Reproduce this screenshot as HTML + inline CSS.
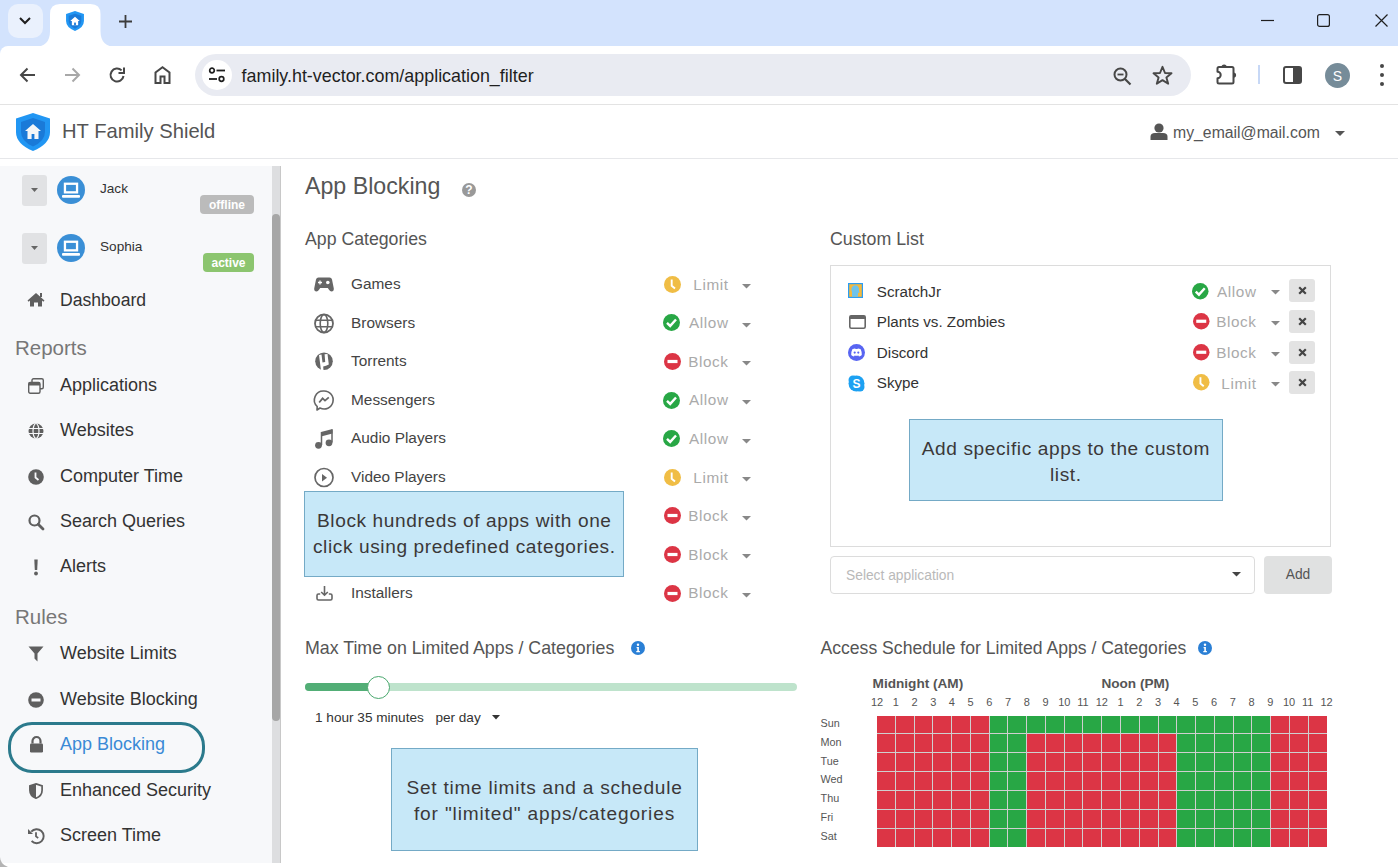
<!DOCTYPE html>
<html><head><meta charset="utf-8"><style>
html,body{margin:0;padding:0;width:1398px;height:867px;overflow:hidden;background:#fff;position:relative;font-family:"Liberation Sans",sans-serif}
.t{position:absolute;white-space:pre}
svg{overflow:visible}
.grid{position:absolute;display:grid;grid-template-columns:repeat(24,1fr);grid-template-rows:repeat(7,1fr);gap:1px;background:#cfcfcf}
.grid i{display:block}
</style></head><body>
<div style="position:absolute;left:0px;top:0px;width:1398px;height:46px;background:#d3e3fd"></div>
<div style="position:absolute;left:8px;top:4px;width:35px;height:34px;background:#eaf1fd;border-radius:10px"></div>
<svg style="position:absolute;left:18px;top:16px;" width="14" height="10" viewBox="0 0 14 10"><path d="M2 2 L7 7 L12 2" fill="none" stroke="#1f1f1f" stroke-width="2"/></svg>
<svg style="position:absolute;left:34px;top:4px" width="84" height="43" viewBox="0 0 84 43"><path d="M0 43 Q16 43 16 27 L16 10 Q16 0 26 0 L56.5 0 Q66.5 0 66.5 10 L66.5 27 Q66.5 43 82.5 43 Z" fill="#fff"/></svg>
<svg style="position:absolute;left:66px;top:11px;" width="18" height="20" viewBox="0 0 34 38"><path d="M17 0 L34 5.5 L34 19 Q34 31 17 38 Q0 31 0 19 L0 5.5 Z" fill="#2196f3"/><path d="M17 5 L29 9 L29 19 Q29 28 17 33.5 Q5 28 5 19 L5 9 Z" fill="#1a7ad8"/><path d="M17 11 L26 19 L23 19 L23 27 L11 27 L11 19 L8 19 Z" fill="#fff"/><rect x="15.3" y="22" width="3.4" height="5" fill="#1a7ad8"/></svg>
<svg style="position:absolute;left:118px;top:14px;" width="15" height="15" viewBox="0 0 15 15"><path d="M7.5 1 V14 M1 7.5 H14" stroke="#3c3c3c" stroke-width="1.8"/></svg>
<svg style="position:absolute;left:1261px;top:19px;" width="14" height="3" viewBox="0 0 14 3"><path d="M0 1.5 H13" stroke="#1f1f1f" stroke-width="1.2"/></svg>
<svg style="position:absolute;left:1317px;top:14px;" width="13" height="13" viewBox="0 0 13 13"><rect x="0.6" y="0.6" width="11.8" height="11.8" rx="2" fill="none" stroke="#1f1f1f" stroke-width="1.2"/></svg>
<svg style="position:absolute;left:1375px;top:14px;" width="13" height="13" viewBox="0 0 13 13"><path d="M0.5 0.5 L12.5 12.5 M12.5 0.5 L0.5 12.5" stroke="#1f1f1f" stroke-width="1.2"/></svg>
<div style="position:absolute;left:0px;top:46px;width:1398px;height:58px;background:#fff"></div>
<div style="position:absolute;left:0px;top:46px;width:8px;height:8px;background:#d3e3fd"></div>
<div style="position:absolute;left:0px;top:46px;width:16px;height:16px;background:#fff;border-radius:8px 0 0 0"></div>
<div style="position:absolute;left:0px;top:104px;width:1398px;height:1px;background:#e3e3e3"></div>
<svg style="position:absolute;left:19px;top:67px;" width="17" height="16" viewBox="0 0 17 16"><path d="M16 8 H2 M8.5 1.5 L2 8 L8.5 14.5" fill="none" stroke="#474747" stroke-width="2"/></svg>
<svg style="position:absolute;left:64px;top:67px;" width="17" height="16" viewBox="0 0 17 16"><path d="M1 8 H15 M8.5 1.5 L15 8 L8.5 14.5" fill="none" stroke="#a8a8a8" stroke-width="2"/></svg>
<svg style="position:absolute;left:109px;top:66px;" width="17" height="18" viewBox="0 0 17 18"><path d="M14.5 10 A6.5 6.5 0 1 1 12.6 4.4" fill="none" stroke="#474747" stroke-width="2"/><path d="M9.5 7 H15 V1.5" fill="none" stroke="#474747" stroke-width="2"/></svg>
<svg style="position:absolute;left:154px;top:66px;" width="17" height="18" viewBox="0 0 17 18"><path d="M1.5 17 V6.5 L8.5 1.2 L15.5 6.5 V17 H10.5 V10.5 H6.5 V17 Z" fill="none" stroke="#474747" stroke-width="2" stroke-linejoin="miter"/></svg>
<div style="position:absolute;left:195px;top:54px;width:996px;height:42px;background:#e9ebf2;border-radius:21px"></div>
<div style="position:absolute;left:202px;top:60px;width:30px;height:30px;background:#fff;border-radius:15px"></div>
<svg style="position:absolute;left:208px;top:67px;" width="18" height="16" viewBox="0 0 18 16"><circle cx="4" cy="3.5" r="2.3" fill="none" stroke="#1f1f1f" stroke-width="1.7"/><path d="M8.5 3.5 H17" stroke="#1f1f1f" stroke-width="1.8"/><circle cx="13.5" cy="12" r="2.3" fill="none" stroke="#1f1f1f" stroke-width="1.7"/><path d="M1 12 H9" stroke="#1f1f1f" stroke-width="1.8"/></svg>
<div class="t" style="left:241.60px;top:66.36px;font-size:17.9px;line-height:21.48px;color:#1f1f1f;font-weight:400;">family.ht-vector.com/application_filter</div>
<svg style="position:absolute;left:1113px;top:67px;" width="19" height="19" viewBox="0 0 19 19"><circle cx="7.5" cy="7.5" r="6" fill="none" stroke="#474747" stroke-width="2"/><path d="M4.5 7.5 H10.5" stroke="#474747" stroke-width="1.8"/><path d="M12 12 L17.5 17.5" stroke="#474747" stroke-width="2.2"/></svg>
<svg style="position:absolute;left:1152px;top:65px;" width="21" height="20" viewBox="0 0 21 20"><path d="M10.5 1.8 L13 8 L19.5 8.3 L14.4 12.4 L16.2 18.7 L10.5 15.1 L4.8 18.7 L6.6 12.4 L1.5 8.3 L8 8 Z" fill="none" stroke="#474747" stroke-width="1.9" stroke-linejoin="round"/></svg>
<svg style="position:absolute;left:1215px;top:64px;" width="23" height="21" viewBox="0 0 23 21"><path d="M2.5 4.5 Q2.5 3 4 3 H17 Q18.5 3 18.5 4.5 V18 Q18.5 19.5 17 19.5 H4 Q2.5 19.5 2.5 18 V14.2 A3.2 3.2 0 0 0 2.5 7.8 Z" fill="none" stroke="#474747" stroke-width="2" stroke-linejoin="round"/><path d="M6.5 3 A2.6 2.6 0 0 1 11.7 3 Z" fill="#474747"/><path d="M18.5 8.5 A2.6 2.6 0 0 1 18.5 13.7 Z" fill="#474747"/></svg>
<div style="position:absolute;left:1258px;top:65px;width:2px;height:19px;background:#c7d8f6"></div>
<svg style="position:absolute;left:1283px;top:66px;" width="19" height="18" viewBox="0 0 19 18"><rect x="1" y="1" width="17" height="16" rx="2" fill="none" stroke="#474747" stroke-width="2"/><rect x="10" y="1" width="8" height="16" fill="#474747"/></svg>
<div style="position:absolute;left:1325px;top:63px;width:25px;height:25px;background:#768c99;border-radius:50%"></div>
<div class="t" style="left:337.50px;width:2000px;text-align:center;top:67.75px;font-size:14px;line-height:16.80px;color:#fff;font-weight:400;">S</div>
<div style="position:absolute;left:1380px;top:64px;width:4px;height:4px;background:#474747;border-radius:50%"></div>
<div style="position:absolute;left:1380px;top:73px;width:4px;height:4px;background:#474747;border-radius:50%"></div>
<div style="position:absolute;left:1380px;top:82px;width:4px;height:4px;background:#474747;border-radius:50%"></div>
<div style="position:absolute;left:0px;top:105px;width:1398px;height:53px;background:#fff"></div>
<div style="position:absolute;left:0px;top:158px;width:1398px;height:1px;background:#e6e7ea"></div>
<svg style="position:absolute;left:16px;top:113px;" width="34" height="38" viewBox="0 0 34 38"><path d="M17 0 L34 5.5 L34 19 Q34 31 17 38 Q0 31 0 19 L0 5.5 Z" fill="#2196f3"/><path d="M17 5 L29 9 L29 19 Q29 28 17 33.5 Q5 28 5 19 L5 9 Z" fill="#1a7ad8"/><path d="M17 11 L25 18 L22.5 18 L22.5 26 L11.5 26 L11.5 18 L9 18 Z" fill="#f4f6f8"/><rect x="15.6" y="21" width="2.8" height="5" fill="#1a7ad8"/></svg>
<div class="t" style="left:62.00px;top:118.88px;font-size:20.2px;line-height:24.24px;color:#555;font-weight:400;">HT Family Shield</div>
<svg style="position:absolute;left:1150px;top:123px;" width="18" height="17" viewBox="0 0 18 17"><circle cx="9" cy="5" r="4.6" fill="#555"/><path d="M0.5 17 V13.5 Q0.5 10 5 10 H13 Q17.5 10 17.5 13.5 V17 Z" fill="#555"/></svg>
<div class="t" style="left:1173.00px;top:124.05px;font-size:15.8px;line-height:18.96px;color:#555;font-weight:400;">my_email@mail.com</div>
<svg style="position:absolute;left:1335px;top:131px;" width="10" height="5" viewBox="0 0 10 5"><path d="M0 0 H10 L5 5 Z" fill="#555"/></svg>
<div style="position:absolute;left:0px;top:166px;width:272px;height:697px;background:#f7f8fa"></div>
<div style="position:absolute;left:272px;top:166px;width:9px;height:697px;background:#dddee0"></div>
<div style="position:absolute;left:280px;top:166px;width:1px;height:697px;background:#c8c8c8"></div>
<div style="position:absolute;left:272px;top:214px;width:8px;height:507px;background:#a6a6a6;border-radius:4px"></div>
<div style="position:absolute;left:22px;top:175.0px;width:25px;height:31px;background:#e1e2e4;border-radius:3px"></div>
<svg style="position:absolute;left:31px;top:188.0px;" width="7" height="4" viewBox="0 0 7 4"><path d="M0 0 H7 L3.5 4 Z" fill="#666"/></svg>
<svg style="position:absolute;left:57px;top:176.4px;" width="28" height="28" viewBox="0 0 28 28"><circle cx="14" cy="14" r="14" fill="#3a8fd6"/><rect x="7.95" y="7.75" width="12.1" height="8.6" fill="none" stroke="#fff" stroke-width="2.3"/><rect x="5" y="19" width="18" height="2.7" rx="1" fill="#fff"/></svg>
<div class="t" style="left:100.00px;top:180.53px;font-size:13.6px;line-height:16.32px;color:#333;font-weight:400;">Jack</div>
<div style="position:absolute;left:200px;top:195.0px;width:54px;height:19px;background:#bbbbbb;border-radius:4px"></div>
<div class="t" style="left:-773.00px;width:2000px;text-align:center;top:197.54px;font-size:12px;line-height:14.40px;color:#fff;font-weight:700;">offline</div>
<div style="position:absolute;left:22px;top:233.0px;width:25px;height:31px;background:#e1e2e4;border-radius:3px"></div>
<svg style="position:absolute;left:31px;top:246.0px;" width="7" height="4" viewBox="0 0 7 4"><path d="M0 0 H7 L3.5 4 Z" fill="#666"/></svg>
<svg style="position:absolute;left:57px;top:234.4px;" width="28" height="28" viewBox="0 0 28 28"><circle cx="14" cy="14" r="14" fill="#3a8fd6"/><rect x="7.95" y="7.75" width="12.1" height="8.6" fill="none" stroke="#fff" stroke-width="2.3"/><rect x="5" y="19" width="18" height="2.7" rx="1" fill="#fff"/></svg>
<div class="t" style="left:100.00px;top:238.53px;font-size:13.6px;line-height:16.32px;color:#333;font-weight:400;">Sophia</div>
<div style="position:absolute;left:203px;top:253.0px;width:51px;height:19px;background:#8cc56f;border-radius:4px"></div>
<div class="t" style="left:-771.50px;width:2000px;text-align:center;top:255.54px;font-size:12px;line-height:14.40px;color:#fff;font-weight:700;">active</div>
<div class="t" style="left:60.00px;top:289.54px;font-size:17.6px;line-height:21.12px;color:#333;font-weight:400;">Dashboard</div>
<div class="t" style="left:15.00px;top:336.40px;font-size:20.5px;line-height:24.60px;color:#777;font-weight:400;">Reports</div>
<div class="t" style="left:60.00px;top:374.86px;font-size:18px;line-height:21.60px;color:#333;font-weight:400;">Applications</div>
<div class="t" style="left:60.00px;top:419.86px;font-size:18px;line-height:21.60px;color:#333;font-weight:400;">Websites</div>
<div class="t" style="left:60.00px;top:465.56px;font-size:18px;line-height:21.60px;color:#333;font-weight:400;">Computer Time</div>
<div class="t" style="left:60.00px;top:510.56px;font-size:18px;line-height:21.60px;color:#333;font-weight:400;">Search Queries</div>
<div class="t" style="left:60.00px;top:555.96px;font-size:18px;line-height:21.60px;color:#333;font-weight:400;">Alerts</div>
<div class="t" style="left:15.00px;top:605.10px;font-size:20.5px;line-height:24.60px;color:#777;font-weight:400;">Rules</div>
<div class="t" style="left:60.00px;top:642.56px;font-size:18px;line-height:21.60px;color:#333;font-weight:400;">Website Limits</div>
<div class="t" style="left:60.00px;top:688.56px;font-size:18px;line-height:21.60px;color:#333;font-weight:400;">Website Blocking</div>
<div style="position:absolute;left:7.5px;top:722px;width:197px;height:50.5px;box-sizing:border-box;border:3.3px solid #2b7a8c;border-radius:24px"></div>
<div class="t" style="left:60.00px;top:734.26px;font-size:18px;line-height:21.60px;color:#3a8ad6;font-weight:400;">App Blocking</div>
<div class="t" style="left:60.00px;top:779.96px;font-size:18px;line-height:21.60px;color:#333;font-weight:400;">Enhanced Security</div>
<div class="t" style="left:60.00px;top:825.36px;font-size:18px;line-height:21.60px;color:#333;font-weight:400;">Screen Time</div>
<svg style="position:absolute;left:27px;top:292px;" width="18" height="15" viewBox="0 0 18 15"><path d="M9 1 L17.5 8.5 L16.3 9.7 L15 8.6 V14.5 H11 V10.5 H7 V14.5 H3 V8.6 L1.7 9.7 L0.5 8.5 Z" fill="#5f5f5f"/><rect x="13" y="1" width="2" height="4" fill="#5f5f5f"/></svg>
<svg style="position:absolute;left:28px;top:378px;" width="16" height="16" viewBox="0 0 16 16"><rect x="4" y="0.7" width="11.3" height="10" rx="1.5" fill="none" stroke="#5f5f5f" stroke-width="1.4"/><rect x="0.7" y="4.5" width="11.3" height="10.8" rx="1.5" fill="#f7f8fa" stroke="#5f5f5f" stroke-width="1.4"/><rect x="0.7" y="4.5" width="11.3" height="3" fill="#5f5f5f"/></svg>
<svg style="position:absolute;left:28px;top:423px;" width="16" height="16" viewBox="0 0 16 16"><circle cx="8" cy="8" r="7.5" fill="#5f5f5f"/><path d="M0.5 5.5 H15.5 M0.5 10.5 H15.5" stroke="#f7f8fa" stroke-width="1.2"/><ellipse cx="8" cy="8" rx="3" ry="7.5" fill="none" stroke="#f7f8fa" stroke-width="1.2"/><path d="M8 0 V16" stroke="#5f5f5f" stroke-width="0"/></svg>
<svg style="position:absolute;left:28px;top:469px;" width="16" height="16" viewBox="0 0 16 16"><circle cx="8" cy="8" r="7.8" fill="#5f5f5f"/><path d="M7.5 3.5 V8.5 L10.5 11" fill="none" stroke="#f7f8fa" stroke-width="1.8"/></svg>
<svg style="position:absolute;left:28px;top:514px;" width="16" height="16" viewBox="0 0 16 16"><circle cx="6.5" cy="6.5" r="5" fill="none" stroke="#5f5f5f" stroke-width="2.2"/><path d="M10.2 10.2 L15 15" stroke="#5f5f5f" stroke-width="2.8" stroke-linecap="round"/></svg>
<svg style="position:absolute;left:32px;top:559px;" width="8" height="17" viewBox="0 0 8 17"><path d="M2.3 0.5 H5.7 L5.2 11 H2.8 Z" fill="#5f5f5f"/><circle cx="4" cy="14.5" r="1.9" fill="#5f5f5f"/></svg>
<svg style="position:absolute;left:28px;top:646px;" width="16" height="16" viewBox="0 0 16 16"><path d="M0.5 0.5 H15.5 L9.5 7.5 V15.5 L6.5 12.5 V7.5 Z" fill="#5f5f5f"/></svg>
<svg style="position:absolute;left:28px;top:692px;" width="16" height="16" viewBox="0 0 16 16"><circle cx="8" cy="8" r="7.8" fill="#5f5f5f"/><rect x="3.5" y="6.5" width="9" height="3" fill="#f7f8fa"/></svg>
<svg style="position:absolute;left:29px;top:736px;" width="15" height="17" viewBox="0 0 15 17"><path d="M3.5 7.5 V5 A4 4 0 0 1 11.5 5 V7.5" fill="none" stroke="#5f5f5f" stroke-width="2.2"/><rect x="1" y="7.5" width="13" height="9" rx="1.2" fill="#5f5f5f"/></svg>
<svg style="position:absolute;left:29px;top:783px;" width="14" height="16" viewBox="0 0 14 16"><path d="M7 0.9 L13.1 2.9 V7.2 Q13.1 12.8 7 15.2 Q0.9 12.8 0.9 7.2 V2.9 Z" fill="none" stroke="#5f5f5f" stroke-width="1.7"/><path d="M7 0.9 L0.9 2.9 V7.2 Q0.9 12.8 7 15.2 Z" fill="#5f5f5f"/></svg>
<svg style="position:absolute;left:27px;top:827px;" width="18" height="18" viewBox="0 0 18 18"><path d="M4.3 4.7 A7 7 0 1 1 4.6 14" fill="none" stroke="#5f5f5f" stroke-width="1.9"/><path d="M1 2 L1 7 L6 7 Z" fill="#5f5f5f"/><path d="M9 5.3 V9.4 L11.2 11" fill="none" stroke="#5f5f5f" stroke-width="1.8"/></svg>
<svg style="position:absolute;left:0px;top:857px;" width="9" height="10" viewBox="0 0 9 10"><path d="M0 0 Q0.3 7.5 8 10 L0 10 Z" fill="#b4b4b4"/></svg>
<div class="t" style="left:305.00px;top:173.04px;font-size:23.2px;line-height:27.84px;color:#555;font-weight:400;">App Blocking</div>
<svg style="position:absolute;left:462px;top:183px;" width="14" height="14" viewBox="0 0 14 14"><circle cx="7" cy="7" r="7" fill="#999"/><text x="7" y="11.2" font-size="12" font-weight="700" text-anchor="middle" fill="#fff" font-family="Liberation Sans">?</text></svg>
<div class="t" style="left:305.00px;top:229.05px;font-size:17.7px;line-height:21.24px;color:#555;font-weight:400;">App Categories</div>
<div class="t" style="left:830.00px;top:228.95px;font-size:17.8px;line-height:21.36px;color:#555;font-weight:400;">Custom List</div>
<div class="t" style="left:351.00px;top:275.02px;font-size:15.4px;line-height:18.48px;color:#444;font-weight:400;">Games</div>
<svg style="position:absolute;left:663.8px;top:275.7px;" width="17" height="17" viewBox="0 0 17 17"><circle cx="8.5" cy="8.5" r="8.5" fill="#f0bd45"/><path d="M7.7 3.5 V9.7 L11.0 12.5" fill="none" stroke="#fff" stroke-width="1.9"/></svg>
<div class="t" style="left:-1271.40px;width:2000px;text-align:right;top:275.52px;font-size:15.3px;line-height:18.36px;color:#aaa;font-weight:400;letter-spacing:0.6px">Limit</div>
<svg style="position:absolute;left:742px;top:284.2px;" width="9" height="5" viewBox="0 0 9 5"><path d="M0 0 H9 L4.5 4.5 Z" fill="#888"/></svg>
<div class="t" style="left:351.00px;top:313.62px;font-size:15.4px;line-height:18.48px;color:#444;font-weight:400;">Browsers</div>
<svg style="position:absolute;left:663.1px;top:314.3px;" width="17" height="17" viewBox="0 0 17 17"><circle cx="8.5" cy="8.5" r="8.5" fill="#28a745"/><path d="M4.0 8.8 L7.2 11.9 L13.0 5.5" fill="none" stroke="#fff" stroke-width="2.4"/></svg>
<div class="t" style="left:-1271.40px;width:2000px;text-align:right;top:314.12px;font-size:15.3px;line-height:18.36px;color:#aaa;font-weight:400;letter-spacing:0.6px">Allow</div>
<svg style="position:absolute;left:742px;top:322.8px;" width="9" height="5" viewBox="0 0 9 5"><path d="M0 0 H9 L4.5 4.5 Z" fill="#888"/></svg>
<div class="t" style="left:351.00px;top:352.22px;font-size:15.4px;line-height:18.48px;color:#444;font-weight:400;">Torrents</div>
<svg style="position:absolute;left:663.8px;top:352.9px;" width="17" height="17" viewBox="0 0 17 17"><circle cx="8.5" cy="8.5" r="8.5" fill="#dc3545"/><rect x="3.5" y="6.9" width="10" height="3.2" fill="#fff"/></svg>
<div class="t" style="left:-1271.40px;width:2000px;text-align:right;top:352.72px;font-size:15.3px;line-height:18.36px;color:#aaa;font-weight:400;letter-spacing:0.6px">Block</div>
<svg style="position:absolute;left:742px;top:361.4px;" width="9" height="5" viewBox="0 0 9 5"><path d="M0 0 H9 L4.5 4.5 Z" fill="#888"/></svg>
<div class="t" style="left:351.00px;top:390.82px;font-size:15.4px;line-height:18.48px;color:#444;font-weight:400;">Messengers</div>
<svg style="position:absolute;left:663.1px;top:391.5px;" width="17" height="17" viewBox="0 0 17 17"><circle cx="8.5" cy="8.5" r="8.5" fill="#28a745"/><path d="M4.0 8.8 L7.2 11.9 L13.0 5.5" fill="none" stroke="#fff" stroke-width="2.4"/></svg>
<div class="t" style="left:-1271.40px;width:2000px;text-align:right;top:391.32px;font-size:15.3px;line-height:18.36px;color:#aaa;font-weight:400;letter-spacing:0.6px">Allow</div>
<svg style="position:absolute;left:742px;top:400.0px;" width="9" height="5" viewBox="0 0 9 5"><path d="M0 0 H9 L4.5 4.5 Z" fill="#888"/></svg>
<div class="t" style="left:351.00px;top:429.42px;font-size:15.4px;line-height:18.48px;color:#444;font-weight:400;">Audio Players</div>
<svg style="position:absolute;left:663.1px;top:430.1px;" width="17" height="17" viewBox="0 0 17 17"><circle cx="8.5" cy="8.5" r="8.5" fill="#28a745"/><path d="M4.0 8.8 L7.2 11.9 L13.0 5.5" fill="none" stroke="#fff" stroke-width="2.4"/></svg>
<div class="t" style="left:-1271.40px;width:2000px;text-align:right;top:429.92px;font-size:15.3px;line-height:18.36px;color:#aaa;font-weight:400;letter-spacing:0.6px">Allow</div>
<svg style="position:absolute;left:742px;top:438.6px;" width="9" height="5" viewBox="0 0 9 5"><path d="M0 0 H9 L4.5 4.5 Z" fill="#888"/></svg>
<div class="t" style="left:351.00px;top:468.02px;font-size:15.4px;line-height:18.48px;color:#444;font-weight:400;">Video Players</div>
<svg style="position:absolute;left:663.8px;top:468.7px;" width="17" height="17" viewBox="0 0 17 17"><circle cx="8.5" cy="8.5" r="8.5" fill="#f0bd45"/><path d="M7.7 3.5 V9.7 L11.0 12.5" fill="none" stroke="#fff" stroke-width="1.9"/></svg>
<div class="t" style="left:-1271.40px;width:2000px;text-align:right;top:468.52px;font-size:15.3px;line-height:18.36px;color:#aaa;font-weight:400;letter-spacing:0.6px">Limit</div>
<svg style="position:absolute;left:742px;top:477.2px;" width="9" height="5" viewBox="0 0 9 5"><path d="M0 0 H9 L4.5 4.5 Z" fill="#888"/></svg>
<div class="t" style="left:351.00px;top:506.62px;font-size:15.4px;line-height:18.48px;color:#444;font-weight:400;">Office</div>
<svg style="position:absolute;left:663.8px;top:507.30000000000007px;" width="17" height="17" viewBox="0 0 17 17"><circle cx="8.5" cy="8.5" r="8.5" fill="#dc3545"/><rect x="3.5" y="6.9" width="10" height="3.2" fill="#fff"/></svg>
<div class="t" style="left:-1271.40px;width:2000px;text-align:right;top:507.12px;font-size:15.3px;line-height:18.36px;color:#aaa;font-weight:400;letter-spacing:0.6px">Block</div>
<svg style="position:absolute;left:742px;top:515.8000000000001px;" width="9" height="5" viewBox="0 0 9 5"><path d="M0 0 H9 L4.5 4.5 Z" fill="#888"/></svg>
<div class="t" style="left:351.00px;top:545.22px;font-size:15.4px;line-height:18.48px;color:#444;font-weight:400;">Utilities</div>
<svg style="position:absolute;left:663.8px;top:545.9px;" width="17" height="17" viewBox="0 0 17 17"><circle cx="8.5" cy="8.5" r="8.5" fill="#dc3545"/><rect x="3.5" y="6.9" width="10" height="3.2" fill="#fff"/></svg>
<div class="t" style="left:-1271.40px;width:2000px;text-align:right;top:545.72px;font-size:15.3px;line-height:18.36px;color:#aaa;font-weight:400;letter-spacing:0.6px">Block</div>
<svg style="position:absolute;left:742px;top:554.4px;" width="9" height="5" viewBox="0 0 9 5"><path d="M0 0 H9 L4.5 4.5 Z" fill="#888"/></svg>
<div class="t" style="left:351.00px;top:583.82px;font-size:15.4px;line-height:18.48px;color:#444;font-weight:400;">Installers</div>
<svg style="position:absolute;left:663.8px;top:584.5px;" width="17" height="17" viewBox="0 0 17 17"><circle cx="8.5" cy="8.5" r="8.5" fill="#dc3545"/><rect x="3.5" y="6.9" width="10" height="3.2" fill="#fff"/></svg>
<div class="t" style="left:-1271.40px;width:2000px;text-align:right;top:584.32px;font-size:15.3px;line-height:18.36px;color:#aaa;font-weight:400;letter-spacing:0.6px">Block</div>
<svg style="position:absolute;left:742px;top:593.0px;" width="9" height="5" viewBox="0 0 9 5"><path d="M0 0 H9 L4.5 4.5 Z" fill="#888"/></svg>
<svg style="position:absolute;left:314px;top:277px;" width="20" height="15" viewBox="0 0 20 15"><path d="M4.5 0.5 H15.5 Q17.5 0.5 18 2.5 L19.8 11.5 Q20 14.5 17.5 14.5 Q16 14.5 15 12.8 L13.8 11 H6.2 L5 12.8 Q4 14.5 2.5 14.5 Q0 14.5 0.2 11.5 L2 2.5 Q2.5 0.5 4.5 0.5 Z" fill="#666"/><path d="M6 3.5 V7.5 M4 5.5 H8" stroke="#fff" stroke-width="1.3"/><circle cx="13.8" cy="5.5" r="1.8" fill="#fff"/></svg>
<svg style="position:absolute;left:314px;top:313px;" width="20" height="21" viewBox="0 0 20 21"><circle cx="10" cy="10.5" r="9" fill="none" stroke="#666" stroke-width="1.8"/><ellipse cx="10" cy="10.5" rx="3.8" ry="9" fill="none" stroke="#666" stroke-width="1.6"/><path d="M1.5 7.2 H18.5 M1.5 13.8 H18.5" stroke="#666" stroke-width="1.6"/></svg>
<svg style="position:absolute;left:315px;top:352px;" width="18" height="19" viewBox="0 0 18 19"><circle cx="9" cy="9.3" r="8.8" fill="#666"/><path d="M4 3 L6.5 2.5 L7.5 10.5 L10.2 10 L9.6 2.2 L12.5 2 L13.8 12.5 Q11 14 8.2 14.5 L8.5 18.5 L6 18.5 Z" fill="#fff"/></svg>
<svg style="position:absolute;left:314px;top:390px;" width="20" height="21" viewBox="0 0 20 21"><path d="M10 1 A9 9 0 1 1 6 18 L3 20 L3.2 16.5 A9 9 0 0 1 10 1 Z" fill="none" stroke="#666" stroke-width="1.6" stroke-linejoin="round"/><path d="M5.2 12.5 L8.6 8.4 L11 10.6 L14.8 7.4" fill="none" stroke="#666" stroke-width="1.8"/></svg>
<svg style="position:absolute;left:315px;top:428px;" width="18" height="21" viewBox="0 0 18 21"><path d="M6 4 L17.5 1 V5.5 L6 8.5 Z" fill="#666"/><path d="M6.5 4 V17 M17 1.5 V14.5" stroke="#666" stroke-width="1.5"/><circle cx="3.5" cy="17.3" r="3.4" fill="#666"/><circle cx="14" cy="14.8" r="3.4" fill="#666"/></svg>
<svg style="position:absolute;left:314px;top:467px;" width="20" height="21" viewBox="0 0 20 21"><circle cx="10" cy="10.5" r="9" fill="none" stroke="#666" stroke-width="1.7"/><path d="M8 7 L13 10.8 L8 14.5 Z" fill="#666"/></svg>
<svg style="position:absolute;left:316px;top:585px;" width="17" height="16" viewBox="0 0 17 16"><path d="M8.5 1 V10 M5.2 7 L8.5 10.2 L11.8 7" fill="none" stroke="#666" stroke-width="1.6"/><path d="M4.2 9 H2.5 Q1 9 1 10.5 V13.5 Q1 15 2.5 15 H14.5 Q16 15 16 13.5 V10.5 Q16 9 14.5 9 H12.8" fill="none" stroke="#666" stroke-width="1.6"/></svg>
<div style="position:absolute;left:304px;top:491px;width:320px;height:86px;background:#c7e8f8;border:1.5px solid #74aac6;box-sizing:border-box"></div>
<div class="t" style="left:-535.70px;width:2000px;text-align:center;top:510.12px;font-size:19.1px;line-height:22.92px;color:#3b3838;font-weight:400;letter-spacing:0.6px">Block hundreds of apps with one</div>
<div class="t" style="left:-535.70px;width:2000px;text-align:center;top:536.22px;font-size:19.1px;line-height:22.92px;color:#3b3838;font-weight:400;letter-spacing:0.6px">click using predefined categories.</div>
<div style="position:absolute;left:830px;top:265px;width:501px;height:282px;border:1px solid #dcdcdc;box-sizing:border-box;background:#fff"></div>
<div class="t" style="left:876.80px;top:282.51px;font-size:15.2px;line-height:18.24px;color:#333;font-weight:400;">ScratchJr</div>
<svg style="position:absolute;left:1192.05px;top:282.65px;" width="16.5" height="16.5" viewBox="0 0 16.5 16.5"><circle cx="8.25" cy="8.25" r="8.25" fill="#28a745"/><path d="M3.75 8.55 L6.95 11.65 L12.75 5.25" fill="none" stroke="#fff" stroke-width="2.4"/></svg>
<div class="t" style="left:-743.40px;width:2000px;text-align:right;top:282.72px;font-size:15.3px;line-height:18.36px;color:#aaa;font-weight:400;letter-spacing:0.6px">Allow</div>
<svg style="position:absolute;left:1271px;top:290.4px;" width="9" height="5" viewBox="0 0 9 5"><path d="M0 0 H9 L4.5 4.5 Z" fill="#888"/></svg>
<div style="position:absolute;left:1289px;top:279.4px;width:26px;height:23px;background:#e3e3e3;border-radius:3px"></div>
<svg style="position:absolute;left:1297.5px;top:286.4px;" width="9" height="9" viewBox="0 0 9 9"><path d="M1.2 1.2 L7.8 7.8 M7.8 1.2 L1.2 7.8" stroke="#444" stroke-width="2.2"/></svg>
<div class="t" style="left:876.80px;top:313.11px;font-size:15.2px;line-height:18.24px;color:#333;font-weight:400;">Plants vs. Zombies</div>
<svg style="position:absolute;left:1192.85px;top:313.25px;" width="16.5" height="16.5" viewBox="0 0 16.5 16.5"><circle cx="8.25" cy="8.25" r="8.25" fill="#dc3545"/><rect x="3.25" y="6.65" width="10" height="3.2" fill="#fff"/></svg>
<div class="t" style="left:-743.40px;width:2000px;text-align:right;top:313.32px;font-size:15.3px;line-height:18.36px;color:#aaa;font-weight:400;letter-spacing:0.6px">Block</div>
<svg style="position:absolute;left:1271px;top:321.0px;" width="9" height="5" viewBox="0 0 9 5"><path d="M0 0 H9 L4.5 4.5 Z" fill="#888"/></svg>
<div style="position:absolute;left:1289px;top:310.0px;width:26px;height:23px;background:#e3e3e3;border-radius:3px"></div>
<svg style="position:absolute;left:1297.5px;top:317.0px;" width="9" height="9" viewBox="0 0 9 9"><path d="M1.2 1.2 L7.8 7.8 M7.8 1.2 L1.2 7.8" stroke="#444" stroke-width="2.2"/></svg>
<div class="t" style="left:876.80px;top:343.71px;font-size:15.2px;line-height:18.24px;color:#333;font-weight:400;">Discord</div>
<svg style="position:absolute;left:1192.85px;top:343.84999999999997px;" width="16.5" height="16.5" viewBox="0 0 16.5 16.5"><circle cx="8.25" cy="8.25" r="8.25" fill="#dc3545"/><rect x="3.25" y="6.65" width="10" height="3.2" fill="#fff"/></svg>
<div class="t" style="left:-743.40px;width:2000px;text-align:right;top:343.92px;font-size:15.3px;line-height:18.36px;color:#aaa;font-weight:400;letter-spacing:0.6px">Block</div>
<svg style="position:absolute;left:1271px;top:351.59999999999997px;" width="9" height="5" viewBox="0 0 9 5"><path d="M0 0 H9 L4.5 4.5 Z" fill="#888"/></svg>
<div style="position:absolute;left:1289px;top:340.59999999999997px;width:26px;height:23px;background:#e3e3e3;border-radius:3px"></div>
<svg style="position:absolute;left:1297.5px;top:347.59999999999997px;" width="9" height="9" viewBox="0 0 9 9"><path d="M1.2 1.2 L7.8 7.8 M7.8 1.2 L1.2 7.8" stroke="#444" stroke-width="2.2"/></svg>
<div class="t" style="left:876.80px;top:374.31px;font-size:15.2px;line-height:18.24px;color:#333;font-weight:400;">Skype</div>
<svg style="position:absolute;left:1192.85px;top:374.45px;" width="16.5" height="16.5" viewBox="0 0 16.5 16.5"><circle cx="8.25" cy="8.25" r="8.25" fill="#f0bd45"/><path d="M7.45 3.25 V9.45 L10.75 12.25" fill="none" stroke="#fff" stroke-width="1.9"/></svg>
<div class="t" style="left:-743.40px;width:2000px;text-align:right;top:374.52px;font-size:15.3px;line-height:18.36px;color:#aaa;font-weight:400;letter-spacing:0.6px">Limit</div>
<svg style="position:absolute;left:1271px;top:382.2px;" width="9" height="5" viewBox="0 0 9 5"><path d="M0 0 H9 L4.5 4.5 Z" fill="#888"/></svg>
<div style="position:absolute;left:1289px;top:371.2px;width:26px;height:23px;background:#e3e3e3;border-radius:3px"></div>
<svg style="position:absolute;left:1297.5px;top:378.2px;" width="9" height="9" viewBox="0 0 9 9"><path d="M1.2 1.2 L7.8 7.8 M7.8 1.2 L1.2 7.8" stroke="#444" stroke-width="2.2"/></svg>
<svg style="position:absolute;left:848px;top:283px;" width="15" height="15" viewBox="0 0 15 15"><rect x="0" y="0" width="15" height="15" fill="#2a9df4"/><rect x="1.2" y="1.2" width="12.6" height="12.6" fill="#f6b93b"/><path d="M4 13.8 V9 Q2.5 6 4.5 3.5 Q7 1.5 9.5 3 Q11.5 4.5 11 7.5 L11.5 9.5 L10 10 V13.8 Z" fill="#6fc3ea"/></svg>
<svg style="position:absolute;left:849px;top:315px;" width="17" height="14" viewBox="0 0 17 14"><rect x="0.8" y="0.8" width="15.4" height="12.4" rx="1.5" fill="none" stroke="#666" stroke-width="1.6"/><rect x="0.8" y="0.8" width="15.4" height="3.2" fill="#666"/></svg>
<svg style="position:absolute;left:848px;top:344px;" width="17" height="17" viewBox="0 0 17 17"><circle cx="8.5" cy="8.5" r="8.5" fill="#5865f2"/><path d="M4.3 5.2 Q6 4.3 7.2 4.4 L7.5 5 Q8.5 4.8 9.5 5 L9.8 4.4 Q11 4.3 12.7 5.2 Q14 8 13.8 11 Q12.6 12.2 11 12.5 L10.4 11.5 Q8.5 12 6.6 11.5 L6 12.5 Q4.4 12.2 3.2 11 Q3 8 4.3 5.2 Z" fill="#fff"/><circle cx="6.7" cy="8.6" r="1.1" fill="#5865f2"/><circle cx="10.3" cy="8.6" r="1.1" fill="#5865f2"/></svg>
<svg style="position:absolute;left:848px;top:375px;" width="17" height="17" viewBox="0 0 17 17"><circle cx="8.5" cy="8.5" r="8" fill="#1da1f2"/><circle cx="5" cy="5" r="4.5" fill="#1da1f2"/><circle cx="12" cy="12" r="4.5" fill="#1da1f2"/><text x="8.5" y="12.7" font-size="12" font-weight="700" text-anchor="middle" fill="#fff" font-family="Liberation Sans">S</text></svg>
<div style="position:absolute;left:908.5px;top:419.3px;width:314px;height:82px;background:#c7e8f8;border:1.5px solid #74aac6;box-sizing:border-box"></div>
<div class="t" style="left:65.80px;width:2000px;text-align:center;top:437.92px;font-size:19.1px;line-height:22.92px;color:#3b3838;font-weight:400;letter-spacing:0.6px">Add specific apps to the custom</div>
<div class="t" style="left:65.80px;width:2000px;text-align:center;top:463.72px;font-size:19.1px;line-height:22.92px;color:#3b3838;font-weight:400;letter-spacing:0.6px">list.</div>
<div style="position:absolute;left:830px;top:556px;width:425px;height:38px;border:1px solid #dcdcdc;border-radius:4px;box-sizing:border-box;background:#fff"></div>
<div class="t" style="left:846.00px;top:568.14px;font-size:13.8px;line-height:16.56px;color:#b9b9b9;font-weight:400;">Select application</div>
<svg style="position:absolute;left:1232px;top:572px;" width="9" height="5" viewBox="0 0 9 5"><path d="M0 0 H9 L4.5 4.5 Z" fill="#444"/></svg>
<div style="position:absolute;left:1264px;top:556px;width:68px;height:38px;background:#e0e1e1;border-radius:4px"></div>
<div class="t" style="left:298.00px;width:2000px;text-align:center;top:566.94px;font-size:13.8px;line-height:16.56px;color:#555;font-weight:400;">Add</div>
<div class="t" style="left:305.00px;top:638.05px;font-size:17.8px;line-height:21.36px;color:#555;font-weight:400;">Max Time on Limited Apps / Categories</div>
<svg style="position:absolute;left:630.6px;top:641.4px;" width="14" height="14" viewBox="0 0 14 14"><circle cx="7" cy="7" r="7" fill="#2a7fd5"/><circle cx="7" cy="3.8" r="1.2" fill="#fff"/><path d="M5.6 6 H7.9 V10 H8.9 V11.2 H5.3 V10 H6.3 V7.2 H5.6 Z" fill="#fff"/></svg>
<div style="position:absolute;left:305px;top:683px;width:492px;height:8px;background:#bee3cc;border-radius:4px"></div>
<div style="position:absolute;left:305px;top:683px;width:75px;height:8px;background:#52ae76;border-radius:4px 0 0 4px"></div>
<div style="position:absolute;left:367px;top:676px;width:23px;height:23px;box-sizing:border-box;border:1.5px solid #4aa86e;border-radius:50%;background:#fff"></div>
<div class="t" style="left:315.00px;top:710.13px;font-size:13.6px;line-height:16.32px;color:#333;font-weight:400;">1 hour 35 minutes</div>
<div class="t" style="left:435.40px;top:710.13px;font-size:13.6px;line-height:16.32px;color:#333;font-weight:400;">per day</div>
<svg style="position:absolute;left:492px;top:715px;" width="8" height="4.5" viewBox="0 0 8 4.5"><path d="M0 0 H8 L4 4.5 Z" fill="#333"/></svg>
<div style="position:absolute;left:390.7px;top:747.7px;width:307px;height:103.5px;background:#c7e8f8;border:1.5px solid #74aac6;box-sizing:border-box"></div>
<div class="t" style="left:-455.50px;width:2000px;text-align:center;top:777.12px;font-size:19.1px;line-height:22.92px;color:#3b3838;font-weight:400;letter-spacing:0.75px">Set time limits and a schedule</div>
<div class="t" style="left:-455.50px;width:2000px;text-align:center;top:802.72px;font-size:19.1px;line-height:22.92px;color:#3b3838;font-weight:400;letter-spacing:0.85px">for &quot;limited&quot; apps/categories</div>
<div class="t" style="left:820.50px;top:637.84px;font-size:17.6px;line-height:21.12px;color:#555;font-weight:400;">Access Schedule for Limited Apps / Categories</div>
<svg style="position:absolute;left:1198px;top:641.4px;" width="14" height="14" viewBox="0 0 14 14"><circle cx="7" cy="7" r="7" fill="#2a7fd5"/><circle cx="7" cy="3.8" r="1.2" fill="#fff"/><path d="M5.6 6 H7.9 V10 H8.9 V11.2 H5.3 V10 H6.3 V7.2 H5.6 Z" fill="#fff"/></svg>
<div class="t" style="left:872.60px;top:675.93px;font-size:13.6px;line-height:16.32px;color:#555;font-weight:700;">Midnight (AM)</div>
<div class="t" style="left:1101.40px;top:675.93px;font-size:13.6px;line-height:16.32px;color:#555;font-weight:700;">Noon (PM)</div>
<div class="t" style="left:-123.00px;width:2000px;text-align:center;top:695.59px;font-size:11px;line-height:13.20px;color:#555;font-weight:400;">12</div>
<div class="t" style="left:-104.27px;width:2000px;text-align:center;top:695.59px;font-size:11px;line-height:13.20px;color:#555;font-weight:400;">1</div>
<div class="t" style="left:-85.54px;width:2000px;text-align:center;top:695.59px;font-size:11px;line-height:13.20px;color:#555;font-weight:400;">2</div>
<div class="t" style="left:-66.81px;width:2000px;text-align:center;top:695.59px;font-size:11px;line-height:13.20px;color:#555;font-weight:400;">3</div>
<div class="t" style="left:-48.08px;width:2000px;text-align:center;top:695.59px;font-size:11px;line-height:13.20px;color:#555;font-weight:400;">4</div>
<div class="t" style="left:-29.35px;width:2000px;text-align:center;top:695.59px;font-size:11px;line-height:13.20px;color:#555;font-weight:400;">5</div>
<div class="t" style="left:-10.62px;width:2000px;text-align:center;top:695.59px;font-size:11px;line-height:13.20px;color:#555;font-weight:400;">6</div>
<div class="t" style="left:8.10px;width:2000px;text-align:center;top:695.59px;font-size:11px;line-height:13.20px;color:#555;font-weight:400;">7</div>
<div class="t" style="left:26.83px;width:2000px;text-align:center;top:695.59px;font-size:11px;line-height:13.20px;color:#555;font-weight:400;">8</div>
<div class="t" style="left:45.56px;width:2000px;text-align:center;top:695.59px;font-size:11px;line-height:13.20px;color:#555;font-weight:400;">9</div>
<div class="t" style="left:64.29px;width:2000px;text-align:center;top:695.59px;font-size:11px;line-height:13.20px;color:#555;font-weight:400;">10</div>
<div class="t" style="left:83.02px;width:2000px;text-align:center;top:695.59px;font-size:11px;line-height:13.20px;color:#555;font-weight:400;">11</div>
<div class="t" style="left:101.75px;width:2000px;text-align:center;top:695.59px;font-size:11px;line-height:13.20px;color:#555;font-weight:400;">12</div>
<div class="t" style="left:120.48px;width:2000px;text-align:center;top:695.59px;font-size:11px;line-height:13.20px;color:#555;font-weight:400;">1</div>
<div class="t" style="left:139.21px;width:2000px;text-align:center;top:695.59px;font-size:11px;line-height:13.20px;color:#555;font-weight:400;">2</div>
<div class="t" style="left:157.94px;width:2000px;text-align:center;top:695.59px;font-size:11px;line-height:13.20px;color:#555;font-weight:400;">3</div>
<div class="t" style="left:176.67px;width:2000px;text-align:center;top:695.59px;font-size:11px;line-height:13.20px;color:#555;font-weight:400;">4</div>
<div class="t" style="left:195.40px;width:2000px;text-align:center;top:695.59px;font-size:11px;line-height:13.20px;color:#555;font-weight:400;">5</div>
<div class="t" style="left:214.12px;width:2000px;text-align:center;top:695.59px;font-size:11px;line-height:13.20px;color:#555;font-weight:400;">6</div>
<div class="t" style="left:232.85px;width:2000px;text-align:center;top:695.59px;font-size:11px;line-height:13.20px;color:#555;font-weight:400;">7</div>
<div class="t" style="left:251.58px;width:2000px;text-align:center;top:695.59px;font-size:11px;line-height:13.20px;color:#555;font-weight:400;">8</div>
<div class="t" style="left:270.31px;width:2000px;text-align:center;top:695.59px;font-size:11px;line-height:13.20px;color:#555;font-weight:400;">9</div>
<div class="t" style="left:289.04px;width:2000px;text-align:center;top:695.59px;font-size:11px;line-height:13.20px;color:#555;font-weight:400;">10</div>
<div class="t" style="left:307.77px;width:2000px;text-align:center;top:695.59px;font-size:11px;line-height:13.20px;color:#555;font-weight:400;">11</div>
<div class="t" style="left:326.50px;width:2000px;text-align:center;top:695.59px;font-size:11px;line-height:13.20px;color:#555;font-weight:400;">12</div>
<div class="t" style="left:820.60px;top:717.18px;font-size:10.8px;line-height:12.96px;color:#555;font-weight:400;">Sun</div>
<div class="t" style="left:820.60px;top:735.91px;font-size:10.8px;line-height:12.96px;color:#555;font-weight:400;">Mon</div>
<div class="t" style="left:820.60px;top:754.63px;font-size:10.8px;line-height:12.96px;color:#555;font-weight:400;">Tue</div>
<div class="t" style="left:820.60px;top:773.36px;font-size:10.8px;line-height:12.96px;color:#555;font-weight:400;">Wed</div>
<div class="t" style="left:820.60px;top:792.09px;font-size:10.8px;line-height:12.96px;color:#555;font-weight:400;">Thu</div>
<div class="t" style="left:820.60px;top:810.82px;font-size:10.8px;line-height:12.96px;color:#555;font-weight:400;">Fri</div>
<div class="t" style="left:820.60px;top:829.55px;font-size:10.8px;line-height:12.96px;color:#555;font-weight:400;">Sat</div>
<div class="grid" style="left:877px;top:715.6px;width:449.5px;height:131.1px"><i style="background:#dc3545"></i><i style="background:#dc3545"></i><i style="background:#dc3545"></i><i style="background:#dc3545"></i><i style="background:#dc3545"></i><i style="background:#dc3545"></i><i style="background:#28a745"></i><i style="background:#28a745"></i><i style="background:#28a745"></i><i style="background:#28a745"></i><i style="background:#28a745"></i><i style="background:#28a745"></i><i style="background:#28a745"></i><i style="background:#28a745"></i><i style="background:#28a745"></i><i style="background:#28a745"></i><i style="background:#28a745"></i><i style="background:#28a745"></i><i style="background:#28a745"></i><i style="background:#28a745"></i><i style="background:#28a745"></i><i style="background:#dc3545"></i><i style="background:#dc3545"></i><i style="background:#dc3545"></i><i style="background:#dc3545"></i><i style="background:#dc3545"></i><i style="background:#dc3545"></i><i style="background:#dc3545"></i><i style="background:#dc3545"></i><i style="background:#dc3545"></i><i style="background:#28a745"></i><i style="background:#28a745"></i><i style="background:#dc3545"></i><i style="background:#dc3545"></i><i style="background:#dc3545"></i><i style="background:#dc3545"></i><i style="background:#dc3545"></i><i style="background:#dc3545"></i><i style="background:#dc3545"></i><i style="background:#dc3545"></i><i style="background:#28a745"></i><i style="background:#28a745"></i><i style="background:#28a745"></i><i style="background:#28a745"></i><i style="background:#28a745"></i><i style="background:#dc3545"></i><i style="background:#dc3545"></i><i style="background:#dc3545"></i><i style="background:#dc3545"></i><i style="background:#dc3545"></i><i style="background:#dc3545"></i><i style="background:#dc3545"></i><i style="background:#dc3545"></i><i style="background:#dc3545"></i><i style="background:#28a745"></i><i style="background:#28a745"></i><i style="background:#dc3545"></i><i style="background:#dc3545"></i><i style="background:#dc3545"></i><i style="background:#dc3545"></i><i style="background:#dc3545"></i><i style="background:#dc3545"></i><i style="background:#dc3545"></i><i style="background:#dc3545"></i><i style="background:#28a745"></i><i style="background:#28a745"></i><i style="background:#28a745"></i><i style="background:#28a745"></i><i style="background:#28a745"></i><i style="background:#dc3545"></i><i style="background:#dc3545"></i><i style="background:#dc3545"></i><i style="background:#dc3545"></i><i style="background:#dc3545"></i><i style="background:#dc3545"></i><i style="background:#dc3545"></i><i style="background:#dc3545"></i><i style="background:#dc3545"></i><i style="background:#28a745"></i><i style="background:#28a745"></i><i style="background:#dc3545"></i><i style="background:#dc3545"></i><i style="background:#dc3545"></i><i style="background:#dc3545"></i><i style="background:#dc3545"></i><i style="background:#dc3545"></i><i style="background:#dc3545"></i><i style="background:#dc3545"></i><i style="background:#28a745"></i><i style="background:#28a745"></i><i style="background:#28a745"></i><i style="background:#28a745"></i><i style="background:#28a745"></i><i style="background:#dc3545"></i><i style="background:#dc3545"></i><i style="background:#dc3545"></i><i style="background:#dc3545"></i><i style="background:#dc3545"></i><i style="background:#dc3545"></i><i style="background:#dc3545"></i><i style="background:#dc3545"></i><i style="background:#dc3545"></i><i style="background:#28a745"></i><i style="background:#28a745"></i><i style="background:#dc3545"></i><i style="background:#dc3545"></i><i style="background:#dc3545"></i><i style="background:#dc3545"></i><i style="background:#dc3545"></i><i style="background:#dc3545"></i><i style="background:#dc3545"></i><i style="background:#dc3545"></i><i style="background:#28a745"></i><i style="background:#28a745"></i><i style="background:#28a745"></i><i style="background:#28a745"></i><i style="background:#28a745"></i><i style="background:#dc3545"></i><i style="background:#dc3545"></i><i style="background:#dc3545"></i><i style="background:#dc3545"></i><i style="background:#dc3545"></i><i style="background:#dc3545"></i><i style="background:#dc3545"></i><i style="background:#dc3545"></i><i style="background:#dc3545"></i><i style="background:#28a745"></i><i style="background:#28a745"></i><i style="background:#dc3545"></i><i style="background:#dc3545"></i><i style="background:#dc3545"></i><i style="background:#dc3545"></i><i style="background:#dc3545"></i><i style="background:#dc3545"></i><i style="background:#dc3545"></i><i style="background:#dc3545"></i><i style="background:#28a745"></i><i style="background:#28a745"></i><i style="background:#28a745"></i><i style="background:#28a745"></i><i style="background:#28a745"></i><i style="background:#dc3545"></i><i style="background:#dc3545"></i><i style="background:#dc3545"></i><i style="background:#dc3545"></i><i style="background:#dc3545"></i><i style="background:#dc3545"></i><i style="background:#dc3545"></i><i style="background:#dc3545"></i><i style="background:#dc3545"></i><i style="background:#28a745"></i><i style="background:#28a745"></i><i style="background:#dc3545"></i><i style="background:#dc3545"></i><i style="background:#dc3545"></i><i style="background:#dc3545"></i><i style="background:#dc3545"></i><i style="background:#dc3545"></i><i style="background:#dc3545"></i><i style="background:#dc3545"></i><i style="background:#28a745"></i><i style="background:#28a745"></i><i style="background:#28a745"></i><i style="background:#28a745"></i><i style="background:#28a745"></i><i style="background:#dc3545"></i><i style="background:#dc3545"></i><i style="background:#dc3545"></i></div>
</body></html>
